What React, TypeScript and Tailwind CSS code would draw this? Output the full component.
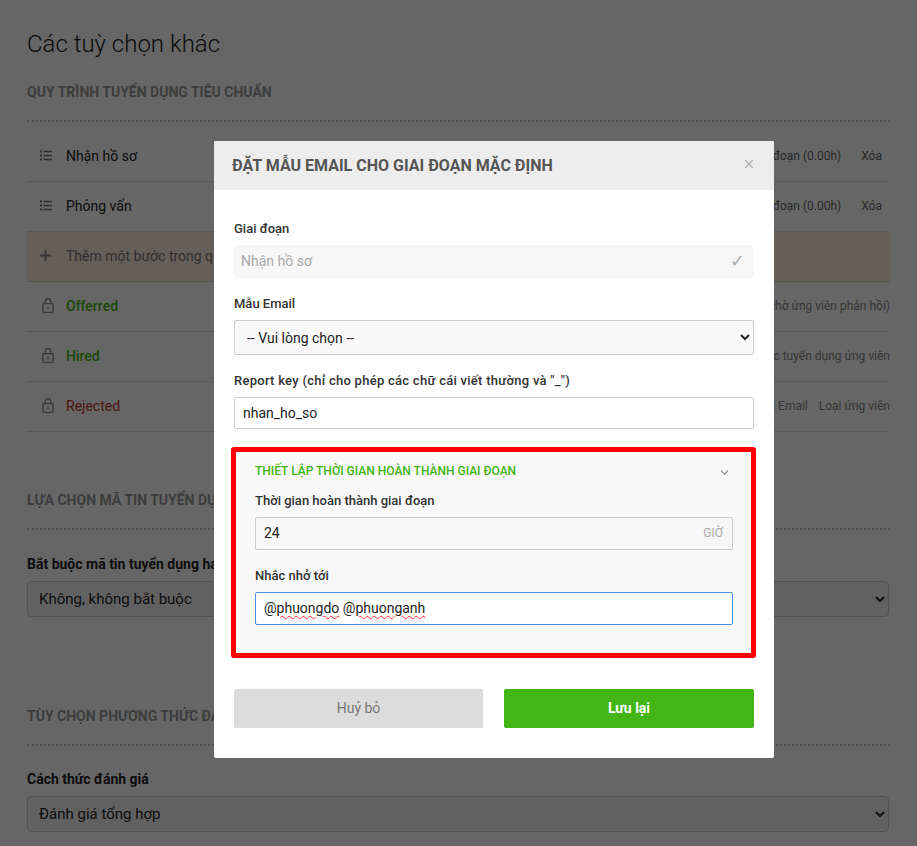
import { ChevronDown, X } from 'lucide-react';

const LockIcon = () => (
  <svg width="12" height="15" viewBox="0 0 12 15" fill="none" stroke="#888" strokeWidth="1.3" className="shrink-0 ml-[2px]">
    <rect x="0.9" y="5.6" width="10.2" height="8.7" rx="1.2" />
    <path d="M3.2 5.6V3.4a2.8 2.8 0 0 1 5.6 0v2.2" />
    <circle cx="6" cy="10" r="1" fill="#888" stroke="none" />
  </svg>
);

const ListIcon = () => (
  <svg width="12" height="11" viewBox="0 0 12 11" fill="#777" className="shrink-0">
    <rect x="0" y="0.5" width="2" height="2" />
    <rect x="3.5" y="0.75" width="8.5" height="1.5" />
    <rect x="0" y="4.5" width="2" height="2" />
    <rect x="3.5" y="4.75" width="8.5" height="1.5" />
    <rect x="0" y="8.5" width="2" height="2" />
    <rect x="3.5" y="8.75" width="8.5" height="1.5" />
  </svg>
);

const PlusIcon = () => (
  <svg width="11" height="11" viewBox="0 0 11 11" fill="#888" className="shrink-0">
    <rect x="4.5" y="0" width="2" height="11" />
    <rect x="0" y="4.5" width="11" height="2" />
  </svg>
);

const Row = ({ icon, children, right }: { icon: React.ReactNode; children: React.ReactNode; right?: React.ReactNode }) => (
  <div className="flex items-center justify-between h-[50px] pb-[2px] border-b border-dotted border-[#c4c4c4] text-sm">
    <div className="flex items-center">
      <span className="w-[39px] pl-[13px] flex items-center">{icon}</span>
      {children}
    </div>
    {right}
  </div>
);

const SectionTitle = ({ children }: { children: React.ReactNode }) => (
  <h3 className="text-sm font-bold leading-5 text-[#999] uppercase">{children}</h3>
);

const Field = ({ label, value }: { label: string; value: string }) => (
  <div>
    <label className="block text-sm font-bold leading-5 text-[#222] mb-[7px]">{label}</label>
    <select className="w-[862px] h-9 pl-[7px] pr-1 text-[15px] bg-[#f2f2f2] border border-[#ccc] rounded text-[#222]" defaultValue={value}>
      <option>{value}</option>
    </select>
  </div>
);

const ModalLabel = ({ children }: { children: React.ReactNode }) => (
  <label className="block text-[13px] font-medium leading-5 text-[#333]">{children}</label>
);

export default function App() {
  return (
    <div className="relative h-[846px] overflow-hidden bg-white font-['Roboto',sans-serif]">
      <div className="pt-[29px] pl-[27px] pr-[27px]">
        <h2 className="text-2xl font-light leading-[30px] text-[#222]">Các tuỳ chọn khác</h2>
        <div className="mt-[23px]">
          <SectionTitle>Quy trình tuyển dụng tiêu chuẩn</SectionTitle>
        </div>
        <div className="mt-[18px] border-b-2 border-dotted border-[#ccc]" />
        <div className="mt-[10px]">
          <Row
            icon={<ListIcon />}
            right={<div className="flex text-xs text-[#666] pr-[8px] gap-5"><span>Thời gian hoàn thành giai đoạn (0.00h)</span><span>Xóa</span></div>}
          >
            <span className="text-[#222]">Nhận hồ sơ</span>
          </Row>
          <Row
            icon={<ListIcon />}
            right={<div className="flex text-xs text-[#666] pr-[8px] gap-5"><span>Thời gian hoàn thành giai đoạn (0.00h)</span><span>Xóa</span></div>}
          >
            <span className="text-[#222]">Phỏng vấn</span>
          </Row>
          <div className="bg-[#fbf0d9]">
            <Row icon={<PlusIcon />}>
              <span className="text-[#777]">Thêm một bước trong quy trình tuyển dụng</span>
            </Row>
          </div>
          <Row icon={<LockIcon />} right={<span className="text-xs text-[#888]">Đã gửi đề nghị (chờ ứng viên phản hồi)</span>}>
            <span className="font-medium text-[#43b515]">Offerred</span>
          </Row>
          <Row icon={<LockIcon />} right={<span className="text-xs text-[#888]">Kết thúc tuyển dụng ứng viên</span>}>
            <span className="font-medium text-[#43b515]">Hired</span>
          </Row>
          <Row
            icon={<LockIcon />}
            right={<div className="flex text-xs text-[#888] gap-[11px]"><span>Gửi Email</span><span>Loại ứng viên</span></div>}
          >
            <span className="text-[#c9302c]">Rejected</span>
          </Row>
        </div>

        <div className="mt-[58px]">
          <SectionTitle>Lựa chọn mã tin tuyển dụng</SectionTitle>
        </div>
        <div className="mt-[18px] mb-[24px] border-b-2 border-dotted border-[#ccc]" />
        <Field label="Bắt buộc mã tin tuyển dụng hay không?" value="Không, không bắt buộc" />

        <div className="mt-[89px]">
          <SectionTitle>Tùy chọn phương thức đánh giá</SectionTitle>
        </div>
        <div className="mt-[18px] mb-[23px] border-b-2 border-dotted border-[#ccc]" />
        <Field label="Cách thức đánh giá" value="Đánh giá tổng hợp" />
      </div>

      {/* overlay + modal */}
      <div className="absolute inset-0 bg-black/60 flex items-start pl-[214px] pt-[141px]">
        <div className="w-[560px] h-[617px] bg-white rounded-[2px] overflow-hidden">
          <div className="h-[49px] bg-[#ededed] flex items-center justify-between pl-[18px] pr-[18px]">
            <h4 className="text-base font-bold text-[#555]">ĐẶT MẪU EMAIL CHO GIAI ĐOẠN MẶC ĐỊNH</h4>
            <X size={14} color="#b0b0b0" strokeWidth={2} className="-mt-1" />
          </div>
          <div className="px-5 pt-[29px]">
            <ModalLabel>Giai đoạn</ModalLabel>
            <div className="mt-[6px] h-[33px] bg-[#f7f7f7] rounded flex items-center justify-between pl-[7px] pr-[9px] pb-[1px] text-sm text-[#aaa]">
              <span>Nhận hồ sơ</span>
              <span className="text-[18px] leading-none text-[#aaa]">✓</span>
            </div>
            <div className="mt-[16px]">
              <ModalLabel>Mẫu Email</ModalLabel>
            </div>
            <select className="mt-[6px] w-full h-[35px] pl-2 text-sm bg-[#f9f9f9] border border-[#ccc] rounded-[2px] text-[#222]" defaultValue="-- Vui lòng chọn --">
              <option>-- Vui lòng chọn --</option>
            </select>
            <div className="mt-[16px]">
              <ModalLabel><span className="tracking-[0.27px]">Report key (chỉ cho phép các chữ cái viết thường và "_")</span></ModalLabel>
            </div>
            <input
              readOnly
              value="nhan_ho_so"
              className="mt-[6px] block w-full h-[32px] px-2 text-sm bg-white border border-[#ccc] rounded-[2px] text-[#222] outline-none"
            />
          </div>

          <div className="mt-[18px] ml-[17px] w-[525px] h-[211px] border-[5px] border-[#ff0000] rounded-[3px] bg-[#f9f9f9] pl-[19px] pr-[18px] pt-[10px]">
            <div className="flex items-center justify-between h-[18px] pr-[1px]">
              <span className="text-xs font-medium text-[#43b515]">THIẾT LẬP THỜI GIAN HOÀN THÀNH GIAI ĐOẠN</span>
              <ChevronDown size={13} color="#888" className="mr-[1px] mt-[3px]" />
            </div>
            <div className="mt-[11px]">
              <ModalLabel>Thời gian hoàn thành giai đoạn</ModalLabel>
            </div>
            <div className="mt-[6px] h-[33px] flex items-center justify-between bg-[#f7f7f7] border border-[#ccc] rounded-[2px] pl-2 pr-[9px] pb-[1px]">
              <span className="text-sm text-[#222]">24</span>
              <span className="text-xs text-[#aaa]">GIỜ</span>
            </div>
            <div className="mt-[16px]">
              <ModalLabel>Nhắc nhở tới</ModalLabel>
            </div>
            <div className="mt-[6px] h-[33px] flex items-center bg-white border border-[#4a90e2] rounded-[2px] pl-2 pb-[2px] text-sm text-[#222]">
              <span>
                @<span className="underline decoration-wavy decoration-red-500 decoration-1 underline-offset-2">phuongdo</span> @
                <span className="underline decoration-wavy decoration-red-500 decoration-1 underline-offset-2">phuonganh</span>
              </span>
            </div>
          </div>

          <div className="flex justify-between px-5 mt-[31px]">
            <button className="w-[249px] h-[39px] pb-[2px] bg-[#dcdcdc] rounded-[2px] text-sm text-[#777]">Huỷ bỏ</button>
            <button className="w-[250px] h-[39px] pb-[2px] bg-[#43b515] rounded-[2px] text-sm font-bold text-white">Lưu lại</button>
          </div>
        </div>
      </div>
    </div>
  );
}
